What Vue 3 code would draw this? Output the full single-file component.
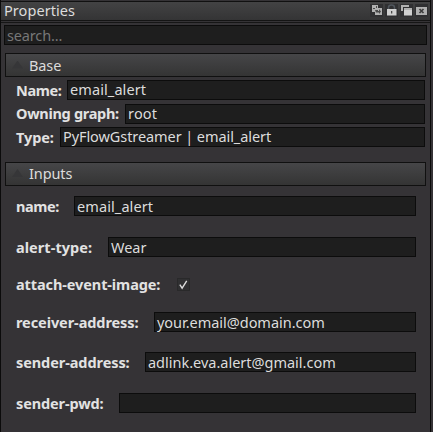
<script setup>
const base = [
  { label: 'Name:', value: 'email_alert', w: 51, ls: -0.35, vs: 0.1 },
  { label: 'Owning graph:', value: 'root', w: 109, ls: -0.3, vs: 0.2 },
  { label: 'Type:', value: 'PyFlowGstreamer | email_alert', w: 44, ls: -0.1, vs: -0.08 },
]
const inputs = [
  { label: 'name:', value: 'email_alert', w: 58, h: 40, ls: -0.4, vs: 0.1 },
  { label: 'alert-type:', value: 'Wear', w: 92, h: 41, ls: 0.05, vs: 0 },
  { label: 'attach-event-image:', check: true, w: 160, h: 34, ls: -0.1, vs: 0 },
  { label: 'receiver-address:', value: 'your.email@domain.com', w: 138, h: 41, ls: -0.08, vs: -0.03 },
  { label: 'sender-address:', value: 'adlink.eva.alert@gmail.com', w: 129, h: 40, ls: -0.08, vs: -0.01 },
  { label: 'sender-pwd:', value: '', w: 103, h: 41, ls: -0.12, vs: 0 },
]
</script>

<template>
  <div class="panel">
    <header class="title">
      <span class="caption">Properties</span>
      <div class="tools">
        <svg width="13" height="13" viewBox="0 0 13 13"><path class="lit" d="M2 1h6v3h4v7H5V8H2z" /><path class="ink" d="M3 4h2v1H3zM5 6h3v1h1V5l2 2.5L9 10V8.500H6zM6 2h1v2H6z" /></svg>
        <svg width="13" height="13" viewBox="0 0 13 13"><path class="arc" d="M3.500 5V3.500a3 2.500 0 0 1 6 0V5" /><path class="white" d="M2 5h9.500v6.500H2z" /><path class="ink" d="M6 7h1.300v2.500H6z" /></svg>
        <svg width="13" height="13" viewBox="0 0 13 13"><path class="lit" d="M1 1h8v2H3v4H1z" /><path class="white" d="M4 5h8v6.500H4z" /><path class="lit" d="M4 4h8v2H4z" /></svg>
        <svg width="13" height="13" viewBox="0 0 13 13"><path class="lit" d="M1 3h11v8H1z" /><path class="cross" d="M4.500 5l4 4m0-4l-4 4" /></svg>
      </div>
    </header>
    <div class="body">
      <input class="search" placeholder="search..." />
      <div class="section"><i class="tri"></i><span>Base</span></div>
      <div class="base">
        <div v-for="r in base" :key="r.label" class="row">
          <b :style="{ width: r.w + 'px', letterSpacing: r.ls + 'px' }">{{ r.label }}</b>
          <div class="field" :style="{ letterSpacing: r.vs + 'px' }">{{ r.value }}</div>
        </div>
      </div>
      <div class="section inputs-head"><i class="tri"></i><span>Inputs</span></div>
      <div class="inputs">
        <div v-for="r in inputs" :key="r.label" class="row" :style="{ height: r.h + 'px' }">
          <b :style="{ width: r.w + 'px', letterSpacing: r.ls + 'px' }">{{ r.label }}</b>
          <div v-if="r.check" class="check">
            <svg width="12" height="12" viewBox="0 0 12 12"><path d="M2 5.500l2.500 4L9.500 1.500" /></svg>
          </div>
          <div v-else class="field" :style="{ letterSpacing: r.vs + 'px' }">{{ r.value }}</div>
        </div>
      </div>
    </div>
  </div>
</template>

<style>
body { background: #353336; }
</style>
<style scoped>
* { box-sizing: border-box; }
.panel { width: 431px; height: 432px; border-left: 1px solid #0b0b0b; border-right: 1px solid #0b0b0b; background: #353336; color: #dcdcdc; font: 14.5px/18px "Noto Sans", sans-serif; overflow: hidden; padding-top: 1px; }
.title { height: 20px; display: flex; justify-content: space-between; border-top: 1px solid #111; border-bottom: 1px solid #141414; background: linear-gradient(#434344, #343435); padding: 0 2px 0 3px; }
.caption { line-height: 16px; letter-spacing: 0.07px; }
.tools { display: flex; gap: 2px; padding-top: 2px; }
.tools svg { background: #303032; }
.lit { fill: #b0b0b0; }
.white { fill: #d0d0d0; }
.ink { fill: #4a4a4a; }
.arc { fill: none; stroke: #50565d; stroke-width: 1.5; }
.cross { stroke: #3c3c3c; stroke-width: 1.7; }
.body { margin-top: 1px; border-top: 1px solid #161616; padding: 2px 3px 0 3px; }
.search { display: block; width: 423px; height: 20px; background: #1e1e1e; border: 1px solid #0c0c0c; border-radius: 0; padding: 0 2px 1px; font: inherit; letter-spacing: -0.15px; color: #dedede; outline: none; }
.search::placeholder { color: #777; opacity: 1; }
.section { margin: 8px 0 0 1px; width: 421px; height: 24px; border: 1px solid #101010; background: linear-gradient(#464648, #343434); display: flex; align-items: center; padding: 0 0 1px 6px; letter-spacing: -0.1px; }
.inputs-head { padding-bottom: 2px; }
.tri { width: 11px; height: 8px; background: #363638; clip-path: polygon(50% 0, 100% 100%, 0 100%); margin-right: 6px; }
.base { padding: 3px 2px 0 12px; height: 77px; display: flex; flex-direction: column; gap: 3.5px; }
.row { display: flex; align-items: center; }
.row b { flex: none; white-space: nowrap; color: #e2e2e2; }
.base b { padding-bottom: 1px; }
.field { flex: 1; height: 20px; background: #1e1e1e; border: 1px solid #0c0c0c; padding-left: 2px; white-space: pre; line-height: 17px; }
.inputs { padding: 0 11px 0 12px; }
.inputs .field { line-height: 18px; }
.check { width: 13px; height: 13px; margin-left: 1px; border: 1px solid #29292a; background: #303032; display: flex; }
.check path { fill: none; stroke: #ddd; stroke-width: 1.5; }
</style>
